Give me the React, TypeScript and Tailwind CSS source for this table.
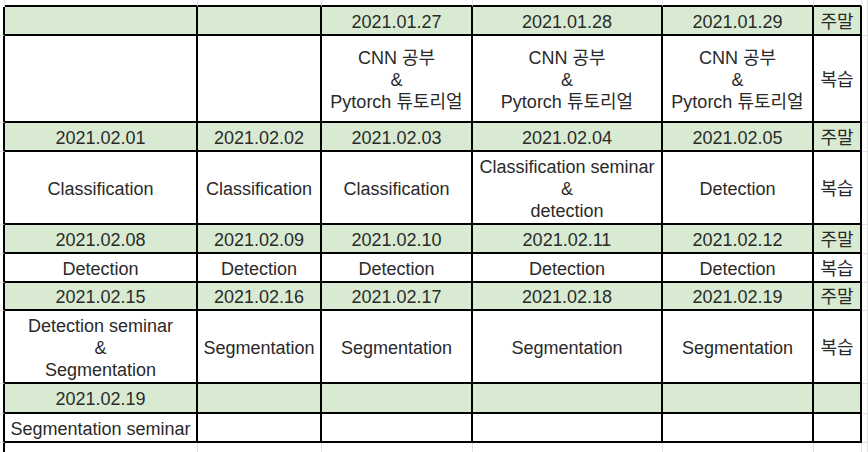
import React from 'react';

const GREEN = 'bg-[#d9ead3]';

type Row = { green: boolean; cells: string[] };

const rows: Row[] = [
  { green: true, cells: ['', '', '2021.01.27', '2021.01.28', '2021.01.29', '주말'] },
  {
    green: false,
    cells: ['', '', 'CNN 공부\n&\nPytorch 튜토리얼', 'CNN 공부\n&\nPytorch 튜토리얼', 'CNN 공부\n&\nPytorch 튜토리얼', '복습'],
  },
  { green: true, cells: ['2021.02.01', '2021.02.02', '2021.02.03', '2021.02.04', '2021.02.05', '주말'] },
  {
    green: false,
    cells: ['Classification', 'Classification', 'Classification', 'Classification seminar\n&\ndetection', 'Detection', '복습'],
  },
  { green: true, cells: ['2021.02.08', '2021.02.09', '2021.02.10', '2021.02.11', '2021.02.12', '주말'] },
  { green: false, cells: ['Detection', 'Detection', 'Detection', 'Detection', 'Detection', '복습'] },
  { green: true, cells: ['2021.02.15', '2021.02.16', '2021.02.17', '2021.02.18', '2021.02.19', '주말'] },
  {
    green: false,
    cells: ['Detection seminar\n&\nSegmentation', 'Segmentation', 'Segmentation', 'Segmentation', 'Segmentation', '복습'],
  },
  { green: true, cells: ['2021.02.19', '', '', '', '', ''] },
  { green: false, cells: ['Segmentation seminar', '', '', '', '', ''] },
];

function Cell({ text, green }: { text: string; green: boolean }) {
  return (
    <div
      className={`flex items-center justify-center overflow-hidden whitespace-pre-line border-r-2 border-b-2 border-black pt-[2px] text-center text-[18px] leading-[22px] text-[#2a2a2a] ${
        green ? GREEN : 'bg-white'
      }`}
    >
      {text}
    </div>
  );
}

export default function App() {
  return (
    <div className="h-[452px] w-[868px] overflow-hidden bg-white font-['Liberation_Sans','Noto_Sans_CJK_KR',sans-serif]">
      <div className="grid h-full grid-cols-[5px_193px_124px_151px_190px_151px_48px_6px_1fr] grid-rows-[7px_29px_87px_29px_73px_29px_29px_28px_73px_30px_29px_1fr]">
        {/* sheet gridlines above the table */}
        <div className="border-r border-[#e1e1e1]" />
        {[0, 1, 2, 3, 4, 5].map((i) => (
          <div key={`t${i}`} className="border-r border-b-2 border-r-[#e1e1e1] border-b-black" />
        ))}
        <div className="border-r border-[#e1e1e1]" />
        <div />

        {rows.map((row, r) => (
          <React.Fragment key={r}>
            <div className="border-r-2 border-b border-r-black border-b-[#e1e1e1]" />
            {row.cells.map((c, i) => (
              <Cell key={i} text={c} green={row.green} />
            ))}
            <div className="border-r border-b border-[#e1e1e1]" />
            <div className="border-b border-[#e1e1e1]" />
          </React.Fragment>
        ))}

        {/* sheet gridlines below the table */}
        <div className="border-r-2 border-black" />
        {[0, 1, 2, 3, 4, 5].map((i) => (
          <div key={`b${i}`} className="border-r border-[#e1e1e1]" />
        ))}
        <div className="border-r border-[#e1e1e1]" />
        <div />
      </div>
    </div>
  );
}
